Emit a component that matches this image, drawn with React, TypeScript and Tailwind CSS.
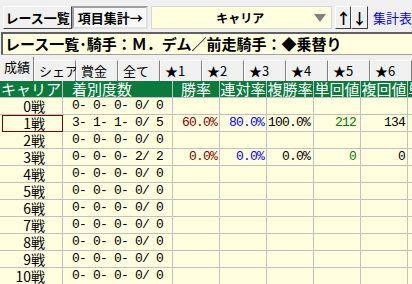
const jp = "font-['Noto_Sans_CJK_JP',sans-serif]";
const mono = "font-['Liberation_Mono','Noto_Sans_CJK_JP',monospace]";

type Row = {
  label: string;
  rec: string;
  win?: string;
  ren?: string;
  fuku?: string;
  tan?: string;
  fukuv?: string;
};

const rows: Row[] = [
  { label: "0戦", rec: "0- 0- 0- 0/ 0" },
  { label: "1戦", rec: "3- 1- 1- 0/ 5", win: "60.0%", ren: "80.0%", fuku: "100.0%", tan: "212", fukuv: "134" },
  { label: "2戦", rec: "0- 0- 0- 0/ 0" },
  { label: "3戦", rec: "0- 0- 0- 2/ 2", win: "0.0%", ren: "0.0%", fuku: "0.0%", tan: "0", fukuv: "0" },
  { label: "4戦", rec: "0- 0- 0- 0/ 0" },
  { label: "5戦", rec: "0- 0- 0- 0/ 0" },
  { label: "6戦", rec: "0- 0- 0- 0/ 0" },
  { label: "7戦", rec: "0- 0- 0- 0/ 0" },
  { label: "8戦", rec: "0- 0- 0- 0/ 0" },
  { label: "9戦", rec: "0- 0- 0- 0/ 0" },
  { label: "10戦", rec: "0- 0- 0- 0/ 0" },
];

const tabs = ["シェア", "賞金", "全て", "★1", "★2", "★3", "★4", "★5", "★6"];

const cols = "grid grid-cols-[63px_110px_47px_47px_47px_47px_47px_20px]";

const App = () => {
  return (
    <div className={`w-[412px] h-[284px] overflow-hidden bg-[#f0f0f0] ${jp} text-black`}>
      {/* toolbar */}
      <div className="h-[32px] pt-[6px] pl-[3px] flex items-start">
        <button className="w-[72px] h-[23px] border border-t-white border-l-white border-r-[#404040] border-b-[#404040] bg-[#f0f0f0] text-[13px] font-bold leading-[20px] whitespace-nowrap">
          レース一覧
        </button>
        <button className="w-[79px] h-[23px] border-2 border-t-[#a0a0a0] border-l-[#a0a0a0] border-r-[#e0e0e0] border-b-[#e0e0e0] bg-[#f8f8f8] text-[13px] font-bold leading-[18px] whitespace-nowrap">
          項目集計→
        </button>
        <div className="ml-[3px] w-[188px] h-[23px] bg-[#ffffe0] border border-[#d8d8d8] flex items-center">
          <span className="flex-1 text-center text-[12px] font-bold pl-[14px]">キャリア</span>
          <svg width="12" height="8" viewBox="0 0 12 8" className="mr-[5px]">
            <polygon points="0,0 12,0 6,8" fill="#808080" />
          </svg>
        </div>
        <button className="ml-[3px] w-[16px] h-[23px] border border-t-white border-l-white border-r-[#404040] border-b-[#404040] text-[15px] font-bold leading-[20px]">
          ↑
        </button>
        <button className="w-[17px] h-[23px] border border-t-white border-l-white border-r-[#404040] border-b-[#404040] text-[15px] font-bold leading-[20px]">
          ↓
        </button>
        <span className="ml-[5px] text-[13px] text-[#0000ff] leading-[23px] whitespace-nowrap">集計表</span>
      </div>

      {/* title bar */}
      <div className="h-[23px] ml-[1px] border-t-2 border-l-2 border-[#606060] border-b border-b-[#a0a0a0] bg-[#ffffe0] pl-[2px] text-[15px] font-bold leading-[19px] whitespace-nowrap overflow-hidden">
        レース一覧･騎手：Ｍ．デム／前走騎手：◆乗替り
      </div>

      {/* tabs */}
      <div className="h-[26px] flex items-end pl-[3px]">
        <div className="w-[40px] h-[24px] text-[13px] leading-[20px] pl-[1px] border-r border-[#808080]">成績</div>
        {tabs.map((t) => (
          <div
            key={t}
            className="w-[42px] h-[21px] shrink-0 border-l border-t border-white border-r border-r-[#808080] bg-[#f0f0f0] text-[13px] leading-[20px] pl-[4px] whitespace-nowrap"
          >
            {t}
          </div>
        ))}
      </div>

      {/* table */}
      <div className={`${cols} bg-[#0b7a3d] text-white text-[15px] leading-[16px] h-[17px] border-b border-[#c0c0c0]`}>
        <div className="border-r border-[#c0c0c0] text-center">キャリア</div>
        <div className="border-r border-[#c0c0c0] pl-[9px]">着別度数</div>
        <div className="border-r border-[#c0c0c0] text-center">勝率</div>
        <div className="border-r border-[#c0c0c0] text-center">連対率</div>
        <div className="border-r border-[#c0c0c0] text-center">複勝率</div>
        <div className="border-r border-[#c0c0c0] text-center">単回値</div>
        <div className="border-r border-[#c0c0c0] text-center">複回値</div>
        <div className="whitespace-nowrap overflow-hidden">単</div>
      </div>
      {rows.map((r, i) => (
        <div key={i} className={`${cols} h-[17px] bg-[#ffffe0] text-[13px] tracking-[-0.8px] leading-[16px] ${mono}`}>
          <div
            className={`border-r border-b border-[#c0c0c0] text-right pr-[17px] text-[14px] tracking-normal ${jp} ${
              i === 1 ? "outline outline-1 outline-[#800000] -outline-offset-1 ml-[2px]" : ""
            }`}
          >
            {r.label}
          </div>
          <div className="border-r border-b border-[#c0c0c0] pl-[9px] whitespace-pre">{r.rec}</div>
          <div className="border-r border-b border-[#c0c0c0] text-right pr-[2px] text-[#800000]">{r.win}</div>
          <div className="border-r border-b border-[#c0c0c0] text-right pr-[2px] text-[#0000ff]">{r.ren}</div>
          <div className="border-r border-b border-[#c0c0c0] text-right pr-[3px]">{r.fuku}</div>
          <div className="border-r border-b border-[#c0c0c0] text-right pr-[4px] text-[#008000]">{r.tan}</div>
          <div className="border-r border-b border-[#c0c0c0] text-right pr-[2px]">{r.fukuv}</div>
          <div className="border-b border-[#c0c0c0]"></div>
        </div>
      ))}
    </div>
  );
};

export default App;
